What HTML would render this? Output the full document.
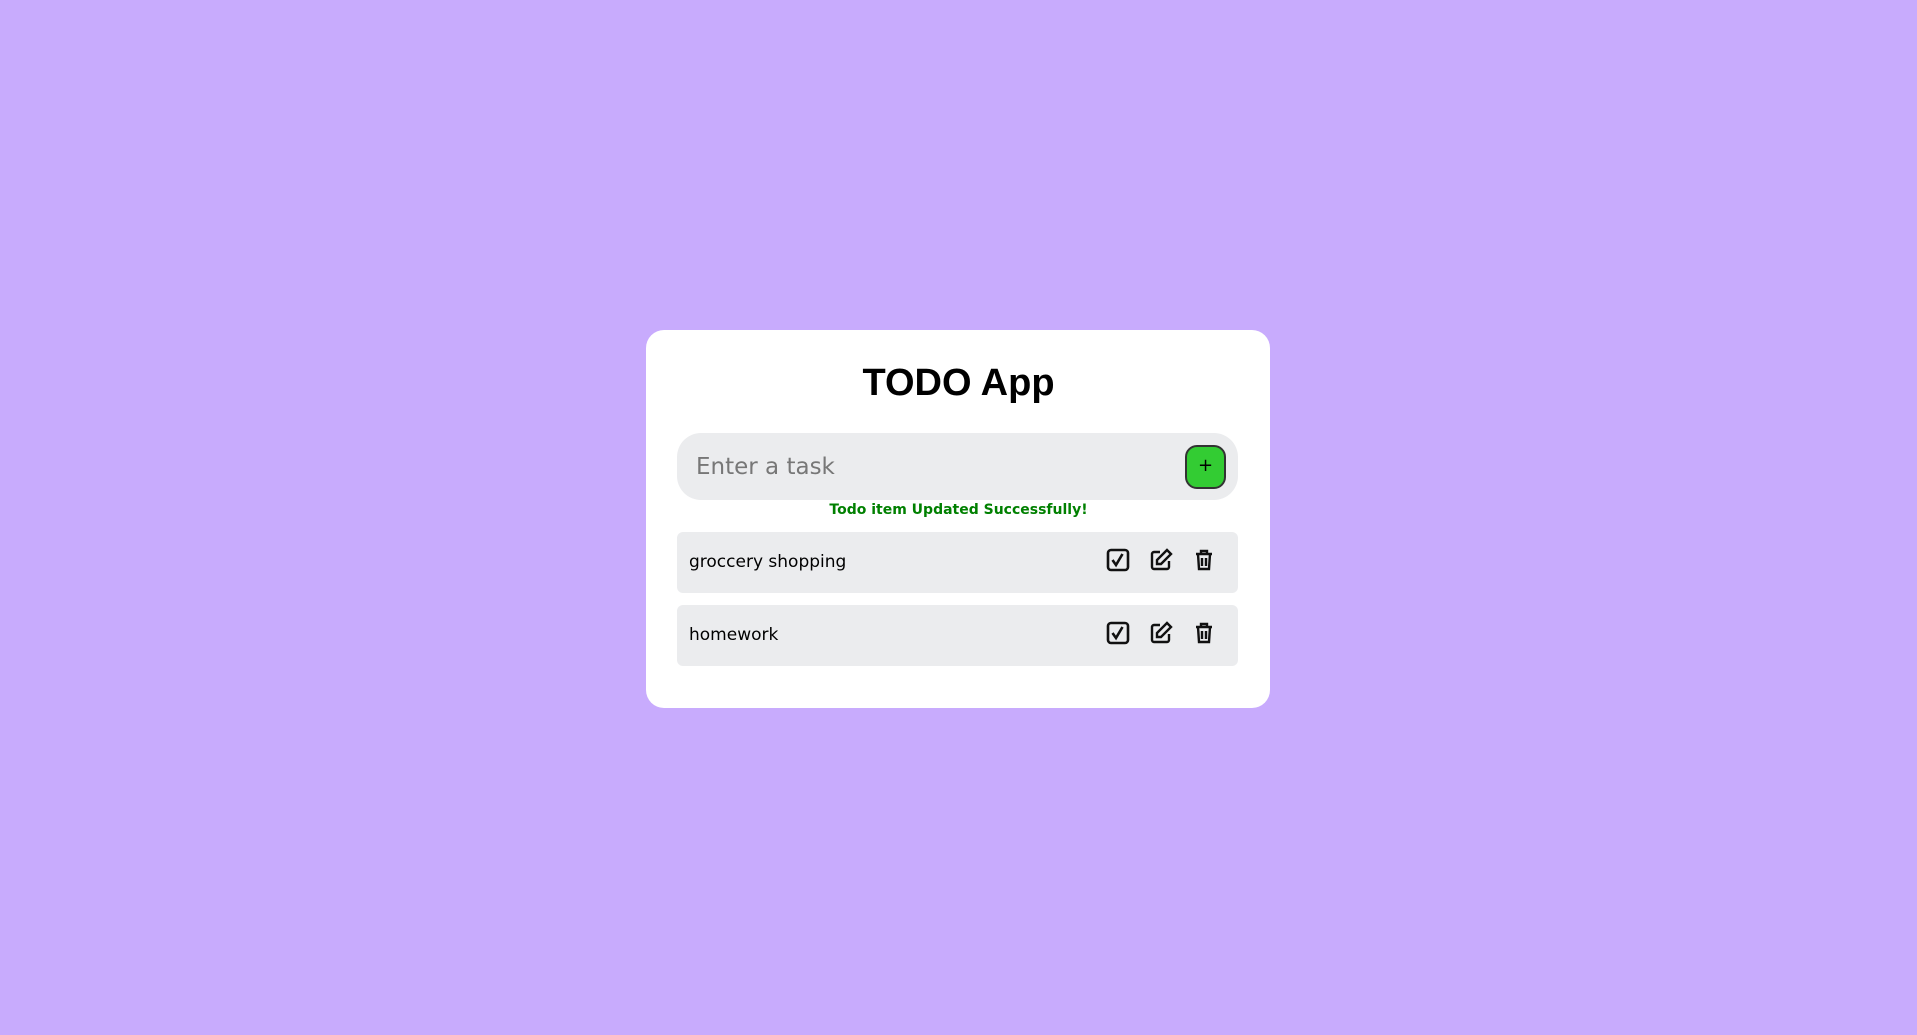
<!DOCTYPE html>
<html><head><meta charset="utf-8"><style>
*{box-sizing:border-box;margin:0;padding:0}
body{width:1917px;height:1035px;background:#c8abfd;font-family:"DejaVu Sans","Liberation Sans",sans-serif;position:relative;overflow:hidden}
.card{position:absolute;left:646px;top:330px;width:624px;height:378px;background:#fff;border-radius:18px}
h1{position:absolute;left:0;right:0;top:362px;text-align:center;font-size:38px;font-weight:bold;color:#000;font-family:"Liberation Sans",sans-serif}
.inp{position:absolute;left:677px;top:433px;width:561px;height:67px;background:#ebecee;border-radius:24px}
.ph{position:absolute;left:696px;top:454px;font-size:23px;color:#777}
.btn{position:absolute;left:1185px;top:445px;width:41px;height:44px;background:#33cc33;border:2px solid #333;border-radius:12px;text-align:center;line-height:38px;font-size:18px}
.msg{position:absolute;left:0;right:0;top:502px;text-align:center;font-size:14px;font-weight:bold;color:#008000}
.item{position:absolute;left:677px;width:561px;height:61px;background:#ebecee;border-radius:6px}
.item span{position:absolute;left:12px;top:20px;font-size:17px;color:#000}
.item svg{position:absolute;top:16px}
</style></head><body>
<div class="card"></div>
<h1>TODO App</h1>
<div class="inp"></div>
<div class="ph">Enter a task</div>
<div class="btn">+</div>
<div class="msg">Todo item Updated Successfully!</div>
<div class="item" style="top:532px"><span>groccery shopping</span>
<svg style="left:429px" width="24" height="24" viewBox="0 0 24 24" fill="none" stroke="#111" stroke-width="2.6"><rect x="2" y="2" width="20" height="20" rx="3"/><path d="M6.5 12l3.5 5 6.5-11"/></svg>
<svg style="left:472px" width="24" height="24" viewBox="0 0 24 24" fill="none" stroke="#111" stroke-width="2.4"><path d="M11 4H5a2 2 0 0 0-2 2v13a2 2 0 0 0 2 2h13a2 2 0 0 0 2-2v-6"/><path d="M18 2l4 4-10 10H8v-4z"/></svg>
<svg style="left:516px" width="22" height="24" viewBox="0 0 22 24" fill="none" stroke="#111" stroke-width="2.4"><path d="M3 6h16M8 6V3h6v3M5 6l1 15h10l1-15M9 10v8M13 10v8"/></svg>
</div>
<div class="item" style="top:605px"><span>homework</span>
<svg style="left:429px" width="24" height="24" viewBox="0 0 24 24" fill="none" stroke="#111" stroke-width="2.6"><rect x="2" y="2" width="20" height="20" rx="3"/><path d="M6.5 12l3.5 5 6.5-11"/></svg>
<svg style="left:472px" width="24" height="24" viewBox="0 0 24 24" fill="none" stroke="#111" stroke-width="2.4"><path d="M11 4H5a2 2 0 0 0-2 2v13a2 2 0 0 0 2 2h13a2 2 0 0 0 2-2v-6"/><path d="M18 2l4 4-10 10H8v-4z"/></svg>
<svg style="left:516px" width="22" height="24" viewBox="0 0 22 24" fill="none" stroke="#111" stroke-width="2.4"><path d="M3 6h16M8 6V3h6v3M5 6l1 15h10l1-15M9 10v8M13 10v8"/></svg>
</div>
</body></html>
